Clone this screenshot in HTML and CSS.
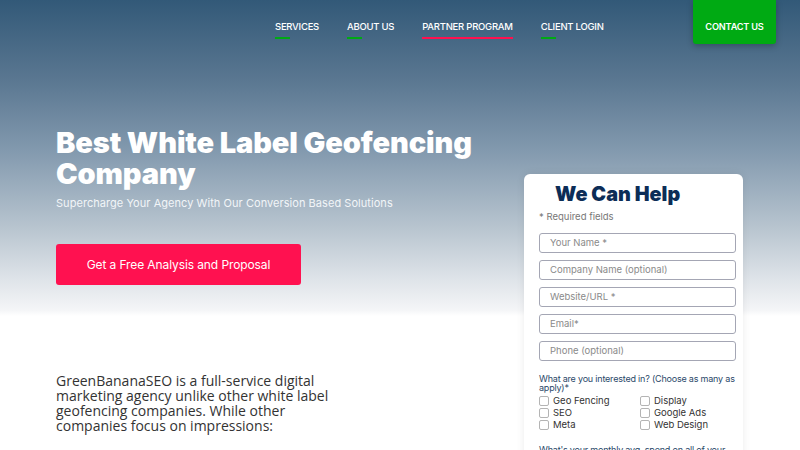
FILE: index.html
```html
<!DOCTYPE html>
<html>
<head>
<meta charset="utf-8">
<link rel="stylesheet" href="styles.css">
</head>
<body>
<header class="topbar">
  <nav class="nav">
    <a class="nav-link" href="#">SERVICES</a>
    <a class="nav-link" href="#">ABOUT US</a>
    <a class="nav-link active" href="#">PARTNER PROGRAM</a>
    <a class="nav-link" href="#">CLIENT LOGIN</a>
  </nav>
  <a class="contact-btn" href="#">CONTACT US</a>
</header>
<main class="hero">
  <section class="hero-left">
    <h1 class="title">Best White Label Geofencing Company</h1>
    <p class="subtitle">Supercharge Your Agency With Our Conversion Based Solutions</p>
    <a class="cta" href="#">Get a Free Analysis and Proposal</a>
    <p class="intro">GreenBananaSEO is a full-service digital marketing agency unlike other white label geofencing companies. While other companies focus on impressions:</p>
  </section>
  <aside class="form-card">
    <h2 class="form-title">We Can Help</h2>
    <p class="req">* Required fields</p>
    <div class="field">Your Name *</div>
    <div class="field">Company Name (optional)</div>
    <div class="field">Website/URL *</div>
    <div class="field">Email*</div>
    <div class="field">Phone (optional)</div>
    <p class="question">What are you interested in? (Choose as many as apply)*</p>
    <div class="checks">
      <label class="check"><span class="box"></span>Geo Fencing</label>
      <label class="check"><span class="box"></span>Display</label>
      <label class="check"><span class="box"></span>SEO</label>
      <label class="check"><span class="box"></span>Google Ads</label>
      <label class="check"><span class="box"></span>Meta</label>
      <label class="check"><span class="box"></span>Web Design</label>
    </div>
    <p class="question q2">What's your monthly avg. spend on all of your</p>
  </aside>
</main>
</body>
</html>
```
FILE: styles.css
```css
* { box-sizing: border-box; }
html, body { margin: 0; height: 100%; }
body {
  font-family: "Inter", "Open Sans", sans-serif;
  background: linear-gradient(180deg, #325978 0px, #5a7791 80px, #8299ae 150px, #b6c3ce 225px, #dfe4e9 280px, #f4f5f7 310px, #ffffff 316px, #ffffff 100%);
  overflow: hidden;
}
.topbar {
  display: flex;
  align-items: flex-start;
  height: 44px;
  padding-right: 24px;
}
.nav {
  display: flex;
  gap: 28px;
  padding-left: 275px;
  padding-top: 20px;
}
.nav-link {
  color: #ffffff;
  text-decoration: none;
  font-size: 9.5px;
  font-weight: 500;
  letter-spacing: -0.25px;
  line-height: 14px;
  position: relative;
  padding-bottom: 5px;
}
.nav-link::after {
  content: "";
  position: absolute;
  left: 0;
  bottom: 0;
  width: 15px;
  height: 2px;
  background: #00aa13;
}
.nav-link.active::after {
  width: 100%;
  background: #ff1150;
}
.contact-btn {
  margin-left: auto;
  width: 83px;
  height: 44px;
  background: #00aa13;
  color: #fff;
  text-decoration: none;
  font-size: 9.2px;
  font-weight: 600;
  display: flex;
  align-items: center;
  justify-content: center;
  padding-top: 8px;
  border-radius: 0 0 3px 3px;
  box-shadow: 0 2px 6px rgba(0,0,0,0.25);
  letter-spacing: -0.2px;
}
.hero {
  display: flex;
  justify-content: space-between;
  padding: 0 57px 0 56px;
}
.hero-left {
  width: 440px;
  padding-top: 83px;
}
.title {
  margin: 0;
  color: #ffffff;
  font-size: 29px;
  font-weight: 900;
  line-height: 31px;
  letter-spacing: -0.1px;
}
.subtitle {
  margin: 6px 0 0;
  color: #f2f5f8;
  font-size: 11px;
  letter-spacing: 0.05px;
  line-height: 16px;
}
.cta {
  display: flex;
  align-items: center;
  justify-content: center;
  margin-top: 33px;
  width: 245px;
  height: 41px;
  background: #ff1150;
  color: #fff;
  text-decoration: none;
  font-size: 12px;
  letter-spacing: -0.1px;
  border-radius: 3px;
}
.intro {
  margin: 88px 0 0;
  width: 275px;
  font-family: "Open Sans", sans-serif;
  font-size: 14px;
  line-height: 15px;
  color: #333333;
}
.form-card {
  margin-top: 130px;
  width: 219px;
  height: 300px;
  background: #ffffff;
  border-radius: 6px;
  box-shadow: 0 0 8px rgba(0,0,0,0.08);
  padding: 8px 7px 0 15px;
}
.form-title {
  margin: 0 0 0 16px;
  color: #0c2d57;
  font-size: 19.8px;
  font-weight: 900;
  line-height: 24px;
}
.req {
  margin: 5px 0 10px;
  color: #777;
  font-size: 9.5px;
  line-height: 12px;
}
.field {
  height: 20px;
  margin-bottom: 7px;
  border: 1px solid #a4a6b4;
  border-radius: 3px;
  font-size: 9.5px;
  color: #8a8a8a;
  padding-left: 10px;
  line-height: 18px;
}
.question {
  margin: 13px 0 3px;
  color: #2a4869;
  font-size: 9px;
  line-height: 9px;
  letter-spacing: -0.2px;
}
.checks {
  display: grid;
  grid-template-columns: 101px 1fr;
  row-gap: 1px;
}
.check {
  display: flex;
  align-items: center;
  gap: 4px;
  font-size: 9.5px;
  color: #333;
  line-height: 11px;
}
.box {
  width: 10px;
  height: 10px;
  border: 1px solid #b4b4b4;
  border-radius: 2px;
}
.q2 { margin-top: 15px; }
```
